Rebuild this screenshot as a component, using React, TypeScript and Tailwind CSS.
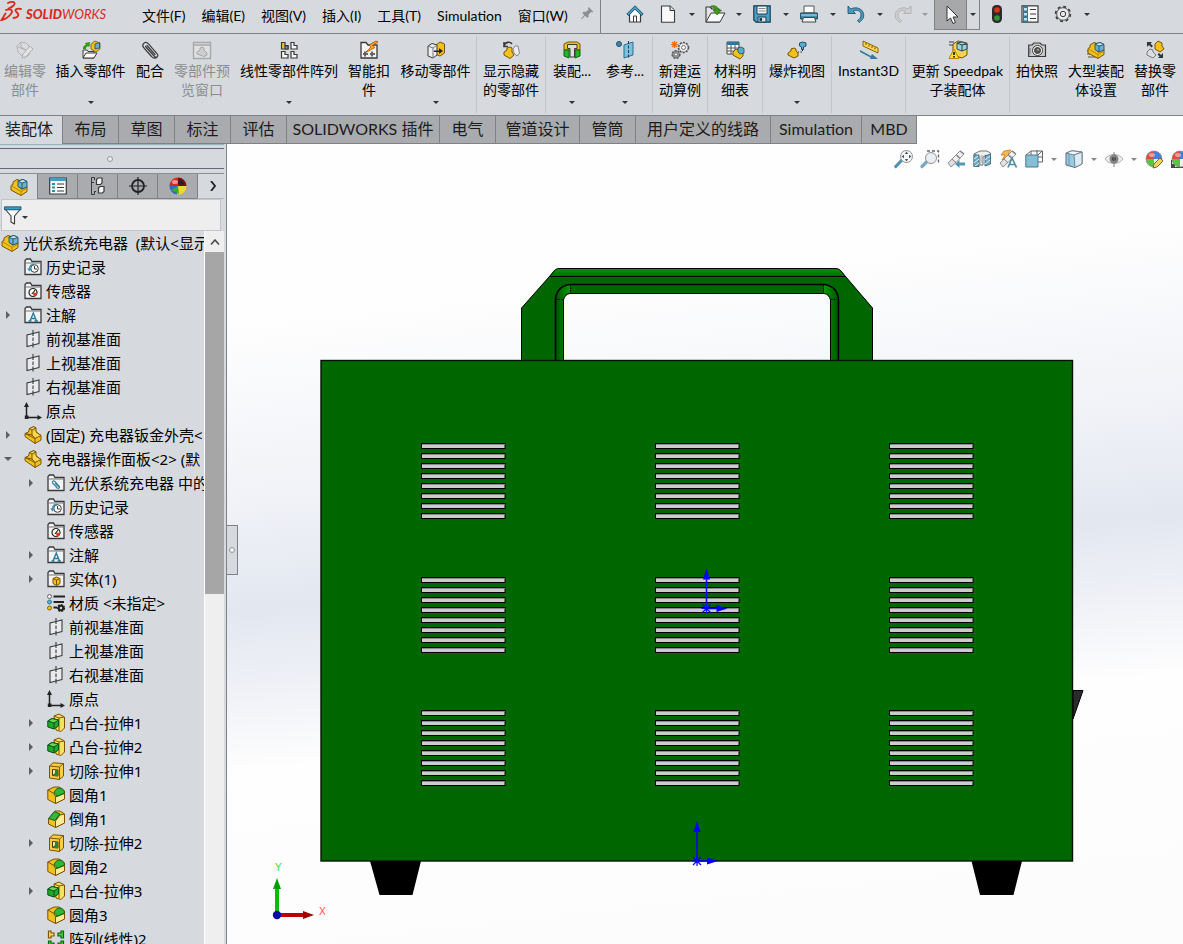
import type { ReactNode } from "react";

const Y = "#f2c21c";
const K = "#3a3a3a";
const B = "#3f8fb5";

const Part = () => (
  <g strokeLinejoin="round" stroke="#7a5200" strokeWidth="1">
    <path d="M5.500 2.500 9.500 .8 12 1.800V6L17 9.500V14L11 17.500 1 10.500V7.500L4.500 6Z" fill={Y} />
    <path d="M5.500 2.500 8 4 12 1.800 9.500 .8Z" fill="#ffe98a" />
    <path d="M8 4V9L11 12.500 17 9.500 12 6" fill="#ffd94a" />
    <path d="M1 7.500 8 9M11 12.500V17.500M1 7.500 11 12.500" fill="none" />
  </g>
);

const Cube = () => (
  <g stroke="#1d4f68" strokeWidth=".9" strokeLinejoin="round">
    <path d="M8 3 13 1.500 17 3.500V9L12 11 8 8.500Z" fill="#69b2d4" />
    <path d="M8 3 12 5 17 3.500 13 1.500Z" fill="#cdeaf5" />
    <path d="M12 5V11" fill="none" />
  </g>
);

const Assembly = () => (
  <g>
    <path d="M1 7.500 3 6.500V4L7 1.500 10 2.500V8L11 11 17 8.500V13.500L11 17.500 1 12Z" fill={Y} stroke="#7a5200" strokeLinejoin="round" />
    <path d="M1 7.500 11 13.500 17 10M11 13.500V17" fill="none" stroke="#a87400" strokeWidth=".8" />
    <Cube />
  </g>
);

const Folder = ({ children }: { children?: ReactNode }) => (
  <g>
    <path d="M1 16.500V2.500L2.500 1H6.500L8 3.500H17V16.500Z" fill="#f4f4f4" stroke={K} strokeWidth="1.300" />
    <path d="M1.500 5H16.500" stroke="#777" />
    {children}
  </g>
);

const Gear = ({ cx, cy, r, fill = "#eee" }: { cx: number; cy: number; r: number; fill?: string }) => (
  <g>
    <circle cx={cx} cy={cy} r={r} fill={fill} stroke="#555" strokeWidth="1.600" strokeDasharray="2 1.200" />
    <circle cx={cx} cy={cy} r={r - 0.6} fill={fill} stroke="#555" strokeWidth=".6" />
    <circle cx={cx} cy={cy} r={r / 2.5} fill="#fff" stroke="#555" strokeWidth=".8" />
  </g>
);

const Ball = () => (
  <g>
    <path d="M9 9V1A8 8 0 0 0 1 9Z" fill="#e2372f" />
    <path d="M9 9V1A8 8 0 0 1 17 9Z" fill="#3a6fd0" />
    <path d="M9 9H1A8 8 0 0 0 9 17Z" fill="#45c12e" />
    <path d="M9 9H17A8 8 0 0 1 9 17Z" fill="#f0f0e6" />
    <circle cx="9" cy="9" r="8" fill="none" stroke="#777" strokeWidth=".7" />
    <ellipse cx="7" cy="5" rx="3" ry="2" fill="#fff" opacity=".45" />
  </g>
);

const Telescope = () => (
  <g stroke="#777" strokeWidth=".9" strokeLinejoin="round">
    <path d="M1 13 5 9 9 12.500 4 17Z" fill="#ddd" />
    <path d="M5 9 13 1 17 4 9 12.500Z" fill="#f0f0f0" />
    <path d="M9.500 5 13 8.500M13 1 17 4" fill="none" strokeWidth="1.500" />
  </g>
);

const ICONS: Record<string, ReactNode> = {
  part: <Part />,
  assembly: <Assembly />,
  editPart: (
    <g fill="#dcdcdc" stroke="#a8a8a8" strokeLinejoin="round">
      <path d="M1 5 5 1 10 2 13 5V14L8 17 2 11Z" />
      <path d="M5 1V6L10 9V14M2 6 10 9" fill="none" />
      <path d="M6 17 7 13 14 5 17 8 10 15.500Z" fill="#e6e6e6" />
    </g>
  ),
  insertPart: (
    <g>
      <path d="M1 17V9H5L6 10.500H12V17Z" fill="#f4f4f4" stroke={K} />
      <path d="M1 17 4 12H15L12 17Z" fill="#fff" stroke={K} />
      <path d="M1 8C1 5 2 4 4 4L3 2 8 1 7.500 6 6 5.300C4 6 4 7 4 8Z" fill="#2e9b12" />
      <path d="M9 3 13 0 18 2V8L14 11 9 8Z" fill={Y} stroke="#7a5200" strokeWidth=".8" />
      <path d="M13 3 17.500 1.500V7L13 8Z" fill="#64aece" stroke="#1d4f68" strokeWidth=".8" />
    </g>
  ),
  clip: (
    <path d="M4.500 5.500 13.500 15.500C15.500 17.500 18 15 16.200 12.800L7.500 2.800C4.500 -.5 .2 3 2.500 6.500L10.500 15.500C12.500 18 15.500 17.500 16.500 15.500M6 4.500 14 13.500" fill="none" stroke={K} strokeWidth="1.200" strokeLinecap="round" />
  ),
  preview: (
    <g fill="none" stroke="#9c9c9c">
      <path d="M.5 1.500H17.500V17.500H.5ZM.5 4H17.500" fill="#e2e2e2" strokeWidth="1.400" />
      <path d="M4 11 7 9V7L9 6 11 7V9L14 12V14L11 15.500 4 13Z" fill="#ccc" />
    </g>
  ),
  linear: (
    <g strokeWidth="1.200" fill="#f7f7f7" stroke={K}>
      <path d="M1.500 1.500H5V4.500H8V8H1.500Z" fill={Y} />
      <path d="M5 5H8V8H5Z" fill="#58abd0" />
      <path d="M11 1.500H14V4.500H17V8H11ZM1.500 10.500H5V13.500H8V17H1.500ZM11 10.500H14V13.500H17V17H11Z" />
    </g>
  ),
  smart: (
    <g>
      <path d="M1 17V1.500H6L8 4H17V17Z" fill="#f4f4f4" stroke={K} strokeWidth="1.300" />
      <path d="M3 13H8M10 13H15M5 10.500V15.500M12 10.500V15.500" stroke="#666" strokeWidth="2" />
      <path d="M16 0 9 4 11 6 5 12 15 6.500 12.500 4.500 18 1Z" fill="#ffa726" stroke="#a63a00" strokeWidth=".7" />
    </g>
  ),
  move: (
    <g strokeLinejoin="round">
      <path d="M9 4 13 1 17.500 3V12L13 15 8 13Z" fill={Y} stroke="#7a5200" />
      <path d="M1 5 5 2.500 10 4V14L6 17 1 15Z" fill="#eee" stroke={K} />
      <path d="M1 5 6 7 10 4M6 7V17" fill="none" stroke="#777" />
      <path d="M7 9.500H12V7L16 10 12 13V11H7Z" fill="#222" />
    </g>
  ),
  showHide: (
    <g>
      <path d="M2 5C3 1 8 0 10 3M2 1V5.500H6" fill="none" stroke={K} strokeWidth="1.600" />
      <path d="M2 11 5 9V7L8 6 10 7V11L12 14 8 17.500 2 14Z" fill={Y} stroke="#7a5200" />
      <path d="M11 8 13 5H16L17.500 12 15 15 12 12Z" fill="#eee" stroke="#888" />
    </g>
  ),
  asmFeature: (
    <g strokeLinejoin="round">
      <path d="M1 3 5 1H14L17 3V9H1Z" fill={Y} stroke="#7a5200" />
      <path d="M1 9H6V17L1 15ZM12 9H17V15L12 17Z" fill="#22b527" stroke="#0b6410" />
      <path d="M4.500 3.500H14V7.500H11.500V16H7V7.500H4.500Z" fill="#dedede" stroke={K} />
    </g>
  ),
  reference: (
    <g>
      <circle cx="3" cy="3" r="2.500" fill="#3f86ac" stroke="#1d4f68" />
      <path d="M8 4 17 1V14L8 17Z" fill="#7cc0de" stroke="#2b6f90" />
      <path d="M12.500 0V18" stroke="#173f54" strokeDasharray="3 1.500" />
    </g>
  ),
  motion: (
    <g>
      <Gear cx={12.500} cy={6.500} r={5} />
      <Gear cx={5} cy={13.500} r={3.800} fill="#aaa" />
      <path d="M3.500 0V7M0 3.500H7M1 1 6 6M6 1 1 6" stroke="#e66b12" strokeWidth="1.200" />
    </g>
  ),
  bom: (
    <g>
      <path d="M1 1H13V13H1Z" fill="#fff" stroke="#444" />
      <path d="M1 1H13V4H1Z" fill="#2f7699" />
      <path d="M1 7H13M1 10H13M5 4V13M9 4V13" stroke="#555" />
      <path d="M7 11 10 8 17 10V15L14 18 7 14Z" fill={Y} stroke="#7a5200" />
      <path d="M12 7 15 6 18 7.500V12L14 13 12 11Z" fill="#58abd0" stroke="#1d4f68" strokeWidth=".8" />
    </g>
  ),
  explode: (
    <g>
      <path d="M0 12 3 10V8L6 7 8 8V10L10 12V15L6 17 0 14Z" fill={Y} stroke="#7a5200" />
      <path d="M11.500 2 14.500 1 18 2V5L15.500 6V8.500H13.500V6L11.500 5Z" fill="#58abd0" stroke="#1d4f68" />
      <path d="M14.500 8.500V11H10" fill="none" stroke="#222" strokeDasharray="1.500 1.500" />
    </g>
  ),
  instant: (
    <g>
      <path d="M3 0 18 7V12L3 5Z" fill="#ffd84f" stroke="#8a6200" />
      <path d="M6 2V4M9 3.500V5.500M12 5V7M15 6.500V8.500" stroke="#6b4a00" />
      <path d="M0 9 11 15 12 13 18 18H10L10.500 16.500 0 11Z" fill="#2f7da1" />
    </g>
  ),
  speedpak: (
    <g strokeLinejoin="round">
      <path d="M4 3 9 0 18 2V14L13 17 4 14Z" fill="#f7d34f" stroke="#7a5200" />
      <path d="M8 2 13 1 18 3V8L13 10 8 8Z" fill="#9fd2e6" stroke="#1d4f68" />
      <path d="M13 4V10M8 2 13 4 18 3M0 1H5M0 4H4" stroke={K} fill="none" />
      <path d="M5 8 10 17.500H0Z" fill="#ffe02a" stroke="#b48700" />
      <path d="M5 11V14M5 15V16.500" stroke="#000" strokeWidth="1.500" />
    </g>
  ),
  camera: (
    <g stroke={K} fill="#c9c9c9">
      <path d="M.7 4H4L6 2H12L14 4H17.500V15.500H.7Z" strokeWidth="1.200" />
      <circle cx="9.500" cy="9.500" r="5" fill="#f7f7f7" />
      <circle cx="9.500" cy="9.500" r="3" fill="#555" />
      <circle cx="10" cy="8.800" r="1" fill="#aaa" stroke="none" />
      <path d="M2 7V13" stroke="#777" />
    </g>
  ),
  largeAsm: (
    <g>
      <path d="M0 10H5M0 13H7M1 16H10" stroke="#555" />
      <Assembly />
    </g>
  ),
  replace: (
    <g>
      <path d="M9 3 12 0 16 2V5L18 8 14 11 9 8Z" fill={Y} stroke="#7a5200" />
      <path d="M1 11 4 8 7 9V11L10 14 7 17 1 14Z" fill="#ddd" stroke="#777" />
      <path d="M1 1H6L4.500 2.500 7 5 5.500 6.500 3 4 1 6ZM17 17H12L13.500 15.500 11.500 13.500 13 12 15 14 17 12Z" fill="#333" />
    </g>
  ),
  home: (
    <g strokeLinejoin="round">
      <path d="M3.500 8V17H14.500V8L9 3Z" fill="#fff" stroke={K} strokeWidth="1.200" />
      <path d="M7.500 17V11H10.500V17" fill="none" stroke={K} />
      <path d="M.8 9 9 .8 17.200 9 15.500 10.500 9 4.200 2.500 10.500Z" fill="#4c9fc4" stroke="#164a62" strokeWidth=".9" />
    </g>
  ),
  file: (
    <g>
      <path d="M2.500 1H11L15.500 5.500V17.200H2.500Z" fill="#f8f8f8" stroke={K} strokeWidth="1.100" strokeLinejoin="round" />
      <path d="M11 1V5.500H15.500" fill="#ddd" stroke={K} />
    </g>
  ),
  open: (
    <g strokeLinejoin="round">
      <path d="M0 17V2H4L6 4H13V17Z" fill="#e4e4e4" stroke={K} strokeWidth="1.100" />
      <path d="M0 17 5 8H19L14 17Z" fill="#fafafa" stroke={K} />
      <path d="M5 1C10 0 12 2 12.500 5H15.500L11 10 7 5H9.500C9 3 8 2 5 2Z" fill="#3da016" stroke="#1e6405" strokeWidth=".6" />
    </g>
  ),
  save: (
    <g>
      <path d="M.8 .8H17.200V17.200H3L.8 15Z" fill="#4a9fc8" stroke="#173e52" strokeWidth="1.200" />
      <path d="M4 1H14V9H4Z" fill="#f6f6f6" stroke="#173e52" />
      <path d="M5.500 3.500H12.500M5.500 6H12.500" stroke="#888" />
      <path d="M5 12H13V17H5Z" fill="#ddd" stroke="#173e52" />
      <path d="M6.500 13H9V16H6.500Z" fill="#173e52" />
    </g>
  ),
  print: (
    <g>
      <path d="M4 1H14V8H4Z" fill="#fff" stroke="#555" />
      <path d="M.7 8H17.300V14H.7Z" fill="#438fb1" stroke="#173e52" />
      <path d="M1 10H17" stroke="#b7def0" />
      <path d="M3.500 12.500H14.500L16 17H2Z" fill="#f4f4f4" stroke="#444" />
    </g>
  ),
  undo: <path d="M1 1V8.500H8.500L6 6.300C10 4 14 6 14 10 14 13 12 14.500 10.500 15.500L12 17.500C16 15 17.300 12 16.500 8.500 15 3 8.500 1.500 3.800 4Z" fill="#4b9bc0" stroke="#174a62" strokeWidth=".8" />,
  redo: <path d="M17 1V8.500H9.500L12 6.300C8 4 4 6 4 10 4 13 6 14.500 7.500 15.500L6 17.500C2 15 .7 12 1.500 8.500 3 3 9.500 1.500 14.200 4Z" fill="#cfcfcf" stroke="#aaa" strokeWidth=".8" />,
  cursor: <path d="M5 0V15L8.500 12 11 17.500 13.500 16.500 11 11H16Z" fill="#fff" stroke="#333" />,
  light: (
    <g>
      <rect x="4" y="0" width="10" height="18" rx="4.500" fill="#2b2b2b" />
      <circle cx="9" cy="5" r="2.800" fill="#e0301c" />
      <circle cx="9" cy="13" r="2.800" fill="#2f9a2c" />
    </g>
  ),
  options: (
    <g>
      <path d="M1 .8H17V17.200H1Z" fill="#fafafa" stroke={K} strokeWidth="1.200" />
      <path d="M2 1H7V17H2Z" fill="#3b7893" />
      <path d="M3 3H6V5.500H3ZM3 8H6V10.500H3ZM3 13H6V15.500H3Z" fill="#bfe2f0" />
      <path d="M9 4.500H15M9 9H15M9 13.500H15" stroke={K} />
    </g>
  ),
  gear: (
    <g>
      <circle cx="9" cy="9" r="7.400" fill="none" stroke={K} strokeWidth="1.600" strokeDasharray="3 2.810" />
      <circle cx="9" cy="9" r="6.300" fill="#e8eaec" stroke={K} strokeWidth=".9" />
      <circle cx="9" cy="9" r="2.700" fill="none" stroke={K} />
    </g>
  ),
  pin: <path d="M10.500 0 17 6.500 15.500 7.500 14 7 10.500 10.500V14L8.500 15 5.500 12 1 17 0 16 4.500 11 2 8.500 3.500 6.500H7L10.500 3.500 9.500 1.500Z" fill="#8d8f92" />,
  props: (
    <g>
      <path d="M.7 1H17.300V17H.7Z" fill="#fafafa" stroke={K} strokeWidth="1.200" />
      <path d="M1 1H17V4H1Z" fill="#4a9cbd" />
      <path d="M3 6H6V8H3ZM3 9.500H6V11.500H3ZM3 13H6V15H3Z" fill="#3a87a9" />
      <path d="M8 7H15M8 10.500H15M8 14H15" stroke={K} />
    </g>
  ),
  config: (
    <g fill="#f4f4f4" stroke={K}>
      <path d="M2.500 .5H5.500V3M2.500 .5V17.500H5.500V14.500M5 5.500H2.500M7 14.500H5" fill="none" />
      <path d="M7.500 2.500 9 1H13V6L11.500 7.500H7.500ZM9.500 11 11 9.500H15V14.500L13.500 16H9.500Z" strokeWidth="1.200" />
    </g>
  ),
  target: (
    <g fill="none" stroke="#222">
      <circle cx="9" cy="9" r="6" strokeWidth="1.800" />
      <path d="M9 0V18M0 9H18" strokeWidth="1.200" />
    </g>
  ),
  appearance: (
    <g>
      <path d="M9 9V.5A8.500 8.500 0 0 0 .5 9Z" fill="#e0261c" />
      <path d="M9 9 9 .5A8.500 8.500 0 0 1 17.500 9Z" fill="#7b1010" />
      <path d="M9 9H.5A8.500 8.500 0 0 0 8 17.500Z" fill="#2e68cf" />
      <path d="M9 9H17.500A8.500 8.500 0 0 1 8 17.500Z" fill="#f5d532" />
      <path d="M2 13 9 9 10 17Z" fill="#33ad30" />
      <path d="M11 2 15 6 13 9 9 6Z" fill="#222" />
      <ellipse cx="6" cy="5" rx="3" ry="2" fill="#fff" opacity=".5" />
    </g>
  ),
  filter: (
    <g strokeLinejoin="round">
      <path d="M1 3 7 10V16L10.500 18V10L16.500 3Z" fill="#fafafa" stroke={K} strokeWidth="1.100" />
      <path d="M.5 .8H17V3.800H.5Z" fill="#3a9cc4" stroke="#164a62" strokeWidth=".8" />
    </g>
  ),
  history: (
    <Folder>
      <circle cx="10.500" cy="10.500" r="3.800" fill="#fff" stroke={K} />
      <path d="M10.500 8V11H13" fill="none" stroke={K} />
      <path d="M3 10.500H8L5.500 13.500Z" fill={B} />
      <path d="M5.500 11C5.500 8 7.500 6.500 10 6.500" fill="none" stroke={B} strokeWidth="1.300" />
    </Folder>
  ),
  sensor: (
    <Folder>
      <circle cx="9" cy="10.500" r="4" fill="#fff" stroke="#222" strokeWidth="1.200" />
      <path d="M9 10.500 13 11A4 4 0 0 1 9.500 14.500Z" fill="#e0401c" />
      <path d="M8 12 11.500 7.500" stroke="#222" strokeWidth="1.200" />
    </Folder>
  ),
  note: (
    <Folder>
      <path d="M4.500 15H7.500M10.500 15H14M6 15 9.300 7 12.500 15M7 12.500H11.500" fill="none" stroke="#2a7ba0" strokeWidth="1.400" />
    </Folder>
  ),
  mates: (
    <Folder>
      <path d="M5 8 10 14C12 15 13.500 13.500 12 12L8 7.500C6 6 4.500 8 6 9.500L10 13.500M8 9 12 13" fill="none" stroke="#3b7f9e" strokeWidth="1.100" />
    </Folder>
  ),
  solid: (
    <Folder>
      <path d="M6 8.500 9.500 7 13 8.500V13.500L9.500 15.500 6 13.500Z" fill={Y} stroke="#7a5200" />
      <path d="M6 8.500 9.500 10 13 8.500M9.500 10V15" fill="none" stroke="#7a5200" />
    </Folder>
  ),
  plane: (
    <g fill="none" stroke={K} strokeWidth="1.100">
      <path d="M3 5 15 2V13.500L3 16.500Z" fill="#e9ebee" stroke="none" />
      <path d="M7 4 3 5V16.500L7 15.500M11 3 15 2V13.500L11 14.500" />
      <path d="M7 4 11 3M7 15.500 11 14.500" />
      <path d="M9 0V6M9 7.500V11M9 12.500V17.500" />
    </g>
  ),
  origin: (
    <g fill="none" stroke="#222" strokeWidth="1.500">
      <path d="M2.500 3V15.500H15" />
      <path d="M2.500 0 5 5H0ZM18 15.500 13.500 13V18ZM.8 13.500H4.500V17H.8Z" fill="#222" stroke="none" />
    </g>
  ),
  material: (
    <g>
      <path d="M6.500 2.500H18M6.500 8H17M6.500 13.500H10" stroke="#222" strokeWidth="1.800" />
      <circle cx="2.500" cy="2.500" r="2" fill="#fff" stroke="#666" />
      <circle cx="2.500" cy="8" r="2" fill="#5ab5dc" stroke="#28789b" />
      <circle cx="2.500" cy="14" r="2" fill={Y} stroke="#8a6200" />
      <circle cx="14" cy="14" r="3.300" fill="#222" stroke="#222" strokeWidth="1.600" strokeDasharray="1.800 1.200" />
      <circle cx="14" cy="14" r="1.200" fill="#ddd" />
    </g>
  ),
  boss: (
    <g strokeLinejoin="round">
      <path d="M7 2 12 0 17.500 3V14L14 17.500 9 16Z" fill="#ffdf63" stroke="#7a5200" />
      <path d="M12 4V16M12 4 17 3M7 2 12 4" fill="none" stroke="#7a5200" />
      <path d="M.8 7 5 4.500 11.500 6V12L7 15 .8 13Z" fill="#25a52b" stroke="#0a5210" />
      <path d="M.8 7 7 9 11.500 6 5 4.500Z" fill="#63dc58" stroke="#0a5210" />
      <path d="M7 9V15" stroke="#0a5210" />
    </g>
  ),
  cut: (
    <g strokeLinejoin="round">
      <path d="M2.500 4 6 .8 16.500 1.500V14L12.500 17.500 2.500 16Z" fill="#f6cf3c" stroke="#7a5200" />
      <path d="M2.500 4 12.500 5 16.500 1.500M12.500 5V17.500" fill="none" stroke="#7a5200" />
      <path d="M5.500 7.500 11 8V14L5.500 13.500Z" fill="#fff3b0" stroke="#4f3900" />
      <path d="M8 8V11L5.500 13 11 14V8Z" fill="#1e8c28" />
    </g>
  ),
  fillet: (
    <g strokeLinejoin="round">
      <path d="M.8 4 7 1H12L17.500 5V13L8.500 17.500 .8 13.500Z" fill={Y} stroke="#7a5200" />
      <path d="M8.500 11 17.500 7.500V13L8.500 17.500Z" fill="#ffec9a" stroke="#7a5200" />
      <path d="M.8 4 7 7.500 8.500 11V17" fill="none" stroke="#7a5200" />
      <path d="M7 6.500C8 3.500 11 2 13 2 16 2.500 17.500 4.500 17.500 7L9.500 10.500C9.500 9 8.500 7.500 7 6.500Z" fill="#30b53a" stroke="#0b6410" />
    </g>
  ),
  chamfer: (
    <g strokeLinejoin="round">
      <path d="M1.500 9 8 1H13L17.500 4V13L8.500 17.500 1.500 14Z" fill={Y} stroke="#7a5200" />
      <path d="M8.500 11 13 5 17.500 4V13L8.500 17.500Z" fill="#ffec9a" stroke="#7a5200" />
      <path d="M1.500 8.500 7.500 1.500 13 4 8 10.500Z" fill="#35b541" stroke="#0b6410" />
    </g>
  ),
  pattern: (
    <g strokeWidth="1.200" stroke="#0b6410" fill="#42cf3d">
      <path d="M1.500 1H4V3H7V6H4V8H1.500Z" fill="#ffdf63" stroke="#7a5200" />
      <path d="M11 3H14V1H16.500V8H14V6H11ZM1.500 11H4V13H7V16H1.500ZM11 13H14V11H16.500V17H11Z" />
    </g>
  ),
  zoomFit: (
    <g>
      <path d="M.8 16.500 6.500 10.500" stroke="#3f87a8" strokeWidth="3.200" strokeLinecap="round" />
      <circle cx="11.500" cy="6.500" r="6" fill="#f4f7f9" stroke="#888" />
      <path d="M11.500 1.500 9.800 4H13.200ZM11.500 11.500 9.800 9H13.200ZM6.500 6.500 9 4.800V8.200ZM16.500 6.500 14 4.800V8.200Z" fill="#444" />
    </g>
  ),
  zoomArea: (
    <g>
      <path d="M6 1H17.500V13" fill="none" stroke="#555" strokeDasharray="3 2" strokeWidth="1.300" />
      <path d="M1 16.500 6 11.500" stroke="#6a9fbc" strokeWidth="3.200" strokeLinecap="round" />
      <circle cx="10" cy="8" r="5.500" fill="#e6edf2" stroke="#888" />
    </g>
  ),
  previous: (
    <g>
      <Telescope />
      <path d="M8 14 12.500 10V12.500H18V15.500H12.500V18Z" fill="#3f8cb0" />
    </g>
  ),
  section: (
    <g strokeLinejoin="round">
      <path d="M.8 4 7 1H14L17.500 3V12L13 14V5L10 7V15H6V7Z" fill="#eee" stroke="#666" />
      <path d="M.8 5H6V16.500H.8ZM12 6 17.500 4V14L12 16Z" fill="#5b9fbd" stroke="#38647a" />
      <path d="M1 9 5 6M1 13 6 9M2 16 6 13M12 10 17 6M12 14 17 10" stroke="#e7f4fa" />
      <path d="M7 6V15M9 5V13" stroke="#999" />
    </g>
  ),
  dynamic: (
    <g>
      <path d="M5 1 12 0 9 4H12L3 10 6 5H2Z" fill="#ffb13b" stroke="#ba5a00" strokeWidth=".7" />
      <Telescope />
      <path d="M9 17.500 13 8 17.500 17.500M10.500 14.500H16" fill="none" stroke="#3f7f9e" strokeWidth="1.700" />
    </g>
  ),
  orient: (
    <g>
      <path d="M6 5V1H17.500V12H13M12 0V5M13 7H18M17 1 13 5M1 5 6 1" fill="none" stroke="#555" />
      <path d="M.8 5H13V17H.8Z" fill="#7bb8cf" stroke="#356c84" />
    </g>
  ),
  display: (
    <g strokeLinejoin="round">
      <path d="M1 3 7 .8 17 2V14L10 17.500 1 15Z" fill="#8fc5da" stroke="#557" />
      <path d="M1 3 9 5 17 2 7 .8Z" fill="#eef7fb" stroke="#678" />
      <path d="M9 5 17 2V14L10 17.500Z" fill="#d8e9f0" stroke="#678" />
      <path d="M4 4V15" stroke="#538ca5" />
    </g>
  ),
  eye: (
    <g>
      <path d="M0 9C4 3 14 3 18 9 14 15 4 15 0 9Z" fill="#ececec" stroke="#aaa" />
      <circle cx="9" cy="9" r="4.500" fill="#777" />
      <circle cx="9" cy="9" r="2" fill="#222" />
      <path d="M9 2V17" stroke="#777" />
    </g>
  ),
  ball: (
    <g>
      <Ball />
      <path d="M8 18 9 14 15 8 18 11 12 17Z" fill="#f5cf4c" stroke="#5e4a10" strokeWidth=".9" />
    </g>
  ),
  scene: (
    <g>
      <path d="M0 10H18V18H0Z" fill="#333" />
      <path d="M1 11H4V14H1ZM4 14H7V17H4ZM12 14H15V17H12ZM15 11H18V14H15Z" fill="#eee" />
      <Ball />
    </g>
  ),
};

function Icon({ name, className = "size-[18px]" }: { name: string; className?: string }) {
  return (
    <svg viewBox="0 0 18 18" className={`${className} shrink-0 overflow-visible`} aria-hidden="true">
      {ICONS[name]}
    </svg>
  );
}

function Caret({ className = "text-[#333]" }: { className?: string }) {
  return (
    <svg viewBox="0 0 6 3" className={`h-[3px] w-[6px] shrink-0 ${className}`} aria-hidden="true">
      <path d="M0 0H6L3 3Z" fill="currentColor" />
    </svg>
  );
}

const MENUS = ["文件(F)", "编辑(E)", "视图(V)", "插入(I)", "工具(T)", "Simulation", "窗口(W)"];

const QUICK = [
  { icon: "file", label: "新建" },
  { icon: "open", label: "打开" },
  { icon: "save", label: "保存" },
  { icon: "print", label: "打印" },
  { icon: "undo", label: "撤消" },
];

function MenuBar() {
  return (
    <header className="flex h-[34px] shrink-0 items-stretch border-b border-[#7f8184]">
      <div className="flex w-[601px] shrink-0 border-r border-[#7f8184]">
        <div className="flex w-[142px] shrink-0 items-start text-[#da291c]">
          <svg viewBox="0 0 24 24" className="size-6 shrink-0" aria-hidden="true">
            <g fill="none" stroke="currentColor" strokeWidth="1.800" strokeLinecap="round">
              <path d="M8 3C12 1 17 2 13.500 5.500 12 7 10 8 8.500 8.500" />
              <path d="M6 10C11 8.500 14 10.500 10.500 14.500 8 17.500 5 19.500 1.500 20L5.500 13.500" />
              <path d="M21 9C16.500 8 14 9.500 16.500 12 19.500 14.500 19 17.500 13.500 18" />
            </g>
          </svg>
          <span className="ml-[2px] pt-1 font-['Lato'] text-[13px] leading-5 italic">
            <span className="font-black">SOLID</span>
            <span>WORKS</span>
          </span>
        </div>
        <nav className="flex min-w-0 flex-1 items-center gap-4 pb-[2px] text-sm leading-5">
          {MENUS.map((m) => (
            <button key={m} type="button" className="whitespace-nowrap">
              {m}
            </button>
          ))}
        </nav>
        <button type="button" aria-label="固定菜单" className="flex w-[26px] shrink-0 items-center justify-center pb-[6px]">
          <Icon name="pin" className="size-[13px]" />
        </button>
      </div>
      <div className="ml-[22px] flex min-w-0 items-stretch pb-[5px]">
        <button type="button" aria-label="主页" className="mr-[9px] flex w-6 items-center justify-center">
          <Icon name="home" />
        </button>
        {QUICK.map((q) => (
          <div key={q.icon} className="flex">
            <button type="button" aria-label={q.label} className="flex w-6 items-center justify-center">
              <Icon name={q.icon} />
            </button>
            <button type="button" aria-label={`${q.label}选项`} className="flex w-[23px] items-center justify-center">
              <Caret />
            </button>
          </div>
        ))}
        <button type="button" aria-label="重做" disabled className="flex w-6 items-center justify-center">
          <Icon name="redo" />
        </button>
        <button type="button" aria-label="重做选项" disabled className="flex w-[19px] items-center justify-center">
          <Caret className="text-[#999]" />
        </button>
        <div className="-mb-[2px] flex border border-t-0 border-[#7f8184]">
          <button type="button" aria-label="选择" className="flex w-8 items-center justify-center border-r border-[#7f8184] bg-[#a7a8aa]">
            <Icon name="cursor" />
          </button>
          <button type="button" aria-label="选择选项" className="flex w-3 items-center justify-center">
            <Caret />
          </button>
        </div>
        <button type="button" aria-label="重建模型" className="flex w-[33px] items-center justify-center">
          <Icon name="light" />
        </button>
        <button type="button" aria-label="文件属性" className="flex w-[33px] items-center justify-center">
          <Icon name="options" />
        </button>
        <button type="button" aria-label="选项" className="flex w-[33px] items-center justify-center">
          <Icon name="gear" />
        </button>
        <button type="button" aria-label="更多选项" className="flex w-4 items-center justify-center">
          <Caret />
        </button>
      </div>
    </header>
  );
}

type Tool = { icon: string; lines: string[]; width: string; menu?: boolean; off?: boolean };

const RIBBON: Tool[][] = [
  [
    { icon: "editPart", lines: ["编辑零", "部件"], width: "w-[50px]", off: true },
    { icon: "insertPart", lines: ["插入零部件"], width: "w-[81px]", menu: true },
    { icon: "clip", lines: ["配合"], width: "w-[38px]" },
    { icon: "preview", lines: ["零部件预", "览窗口"], width: "w-[66px]", off: true },
    { icon: "linear", lines: ["线性零部件阵列"], width: "w-[108px]", menu: true },
    { icon: "smart", lines: ["智能扣", "件"], width: "w-[52px]" },
    { icon: "move", lines: ["移动零部件"], width: "w-[81px]", menu: true },
  ],
  [{ icon: "showHide", lines: ["显示隐藏", "的零部件"], width: "w-[68px]" }],
  [
    { icon: "asmFeature", lines: ["装配..."], width: "w-[52px]", menu: true },
    { icon: "reference", lines: ["参考..."], width: "w-[54px]", menu: true },
  ],
  [{ icon: "motion", lines: ["新建运", "动算例"], width: "w-[54px]" }],
  [{ icon: "bom", lines: ["材料明", "细表"], width: "w-[54px]" }],
  [{ icon: "explode", lines: ["爆炸视图"], width: "w-[68px]", menu: true }],
  [{ icon: "instant", lines: ["Instant3D"], width: "w-[73px]" }],
  [{ icon: "speedpak", lines: ["更新 Speedpak", "子装配体"], width: "w-[103px]" }],
  [
    { icon: "camera", lines: ["拍快照"], width: "w-[54px]" },
    { icon: "largeAsm", lines: ["大型装配", "体设置"], width: "w-[64px]" },
    { icon: "replace", lines: ["替换零", "部件"], width: "w-[54px]" },
  ],
];

function Ribbon() {
  return (
    <div className="flex h-[81px] shrink-0 items-stretch overflow-hidden py-[2px]">
      {RIBBON.map((group, gi) => (
        <div key={gi} className={gi === 0 ? "flex shrink-0" : "flex shrink-0 border-l border-[#c2c5c9]"}>
          {group.map((t) => (
            <button
              key={t.icon}
              type="button"
              disabled={t.off}
              className={`${t.width} ${t.off ? "text-[#8b8d90]" : "text-black"} flex flex-col items-center pt-[5px] text-sm leading-[19px]`}
            >
              <Icon name={t.icon} className={t.off ? "mb-[2px] size-[18px] opacity-80" : "mb-[2px] size-[18px]"} />
              {t.lines.map((l) => (
                <span key={l} className="whitespace-nowrap">
                  {l}
                </span>
              ))}
              {t.menu && (
                <span className="mt-auto pb-[9px]">
                  <Caret />
                </span>
              )}
            </button>
          ))}
        </div>
      ))}
    </div>
  );
}

const TABS = [
  { label: "布局", width: "w-14" },
  { label: "草图", width: "w-14" },
  { label: "标注", width: "w-14" },
  { label: "评估", width: "w-14" },
  { label: "SOLIDWORKS 插件", width: "w-[153px]" },
  { label: "电气", width: "w-14" },
  { label: "管道设计", width: "w-[84px]" },
  { label: "管筒", width: "w-14" },
  { label: "用户定义的线路", width: "w-[135px]" },
  { label: "Simulation", width: "w-[91px]" },
  { label: "MBD", width: "w-14" },
];

function CommandTabs() {
  return (
    <div role="tablist" className="flex h-[29px] shrink-0 border-t border-[#7f8184] bg-[#fefefe] text-base leading-6 text-[#1c1c1c]">
      <button type="button" role="tab" aria-selected="true" className="w-[62px] shrink-0 bg-[#d6dade] pr-1 pb-[2px] whitespace-nowrap">
        装配体
      </button>
      {TABS.map((t) => (
        <button
          key={t.label}
          type="button"
          role="tab"
          aria-selected="false"
          className={`${t.width} shrink-0 border-b border-l border-[#7f8184] bg-[#a9abae] pb-px whitespace-nowrap last:border-r`}
        >
          {t.label}
        </button>
      ))}
    </div>
  );
}

type Node = { icon: string; label: string; level: number; arrow?: "closed" | "open" };

const TREE: Node[] = [
  { icon: "assembly", label: "光伏系统充电器\u00a0 (默认<显示", level: 0 },
  { icon: "history", label: "历史记录", level: 1 },
  { icon: "sensor", label: "传感器", level: 1 },
  { icon: "note", label: "注解", level: 1, arrow: "closed" },
  { icon: "plane", label: "前视基准面", level: 1 },
  { icon: "plane", label: "上视基准面", level: 1 },
  { icon: "plane", label: "右视基准面", level: 1 },
  { icon: "origin", label: "原点", level: 1 },
  { icon: "part", label: "(固定) 充电器钣金外壳<", level: 1, arrow: "closed" },
  { icon: "part", label: "充电器操作面板<2> (默", level: 1, arrow: "open" },
  { icon: "mates", label: "光伏系统充电器 中的", level: 2, arrow: "closed" },
  { icon: "history", label: "历史记录", level: 2 },
  { icon: "sensor", label: "传感器", level: 2 },
  { icon: "note", label: "注解", level: 2, arrow: "closed" },
  { icon: "solid", label: "实体(1)", level: 2, arrow: "closed" },
  { icon: "material", label: "材质 <未指定>", level: 2 },
  { icon: "plane", label: "前视基准面", level: 2 },
  { icon: "plane", label: "上视基准面", level: 2 },
  { icon: "plane", label: "右视基准面", level: 2 },
  { icon: "origin", label: "原点", level: 2 },
  { icon: "boss", label: "凸台-拉伸1", level: 2, arrow: "closed" },
  { icon: "boss", label: "凸台-拉伸2", level: 2, arrow: "closed" },
  { icon: "cut", label: "切除-拉伸1", level: 2, arrow: "closed" },
  { icon: "fillet", label: "圆角1", level: 2 },
  { icon: "chamfer", label: "倒角1", level: 2 },
  { icon: "cut", label: "切除-拉伸2", level: 2, arrow: "closed" },
  { icon: "fillet", label: "圆角2", level: 2 },
  { icon: "boss", label: "凸台-拉伸3", level: 2, arrow: "closed" },
  { icon: "fillet", label: "圆角3", level: 2 },
  { icon: "pattern", label: "阵列(线性)2", level: 2 },
];

const INDENT = ["pl-px", "pl-1", "pl-[27px]"];

function TreeRow({ node }: { node: Node }) {
  return (
    <li role="treeitem" aria-level={node.level + 1} className={`${INDENT[node.level]} flex h-6 items-center`}>
      {node.level > 0 && (
        <span className="mr-3 flex w-2 shrink-0 items-center justify-center text-[#5e6063]">
          {node.arrow && (
            <svg viewBox="0 0 8 8" className="size-2" aria-hidden="true">
              <path d={node.arrow === "open" ? "M0 2H8L4 6Z" : "M2 0 6 4 2 8Z"} fill="currentColor" />
            </svg>
          )}
        </span>
      )}
      <Icon name={node.icon} />
      <span className="ml-1 text-[15px] leading-6 whitespace-nowrap">{node.label}</span>
    </li>
  );
}

const PANEL_TABS = [
  { icon: "props", label: "属性" },
  { icon: "config", label: "配置" },
  { icon: "target", label: "尺寸专家" },
  { icon: "appearance", label: "外观" },
];

function SidePanel() {
  return (
    <aside className="flex w-[227px] shrink-0 flex-col border-r border-[#7f8184] pr-[2px] font-['Noto_Sans','Noto_Sans_CJK_SC',sans-serif]">
      <div className="h-1 shrink-0 border-t border-[#8fb4bd]" />
      <div className="flex h-[21px] shrink-0 items-center justify-center border-y border-[#66667f] pr-1">
        <span className="size-[6px] rounded-full border border-[#999] bg-[#eee]" />
      </div>
      <div role="tablist" className="mt-1 flex h-[26px] shrink-0 border-t border-[#8b8d90]">
        <button type="button" role="tab" aria-selected="true" aria-label="特征树" className="flex w-[37px] items-center justify-center">
          <Icon name="assembly" />
        </button>
        {PANEL_TABS.map((t) => (
          <button
            key={t.icon}
            type="button"
            role="tab"
            aria-selected="false"
            aria-label={t.label}
            className="flex w-10 items-center justify-center border-b border-l border-[#7f8184] bg-[#a9abae]"
          >
            <Icon name={t.icon} />
          </button>
        ))}
        <button type="button" aria-label="更多" className="flex flex-1 items-center justify-center border-b border-l border-b-[#b5b7ba] border-l-[#7f8184] pl-1">
          <svg viewBox="0 0 6 10" className="h-[10px] w-[6px]" aria-hidden="true">
            <path d="M1 0 5 5 1 10" fill="none" stroke="#222" strokeWidth="1.800" />
          </svg>
        </button>
      </div>
      <div className="mr-[3px] ml-px flex h-8 shrink-0 items-center border border-[#c3c5c8] bg-[#eeeeee] pl-[2px]">
        <Icon name="filter" />
        <span className="pt-1">
          <Caret />
        </span>
        <input aria-label="筛选特征树" className="min-w-0 flex-1 bg-transparent px-1 text-sm outline-none" />
      </div>
      <div className="flex min-h-0 flex-1">
        <ul role="tree" className="min-w-0 flex-1 overflow-hidden">
          {TREE.map((n, i) => (
            <TreeRow key={i} node={n} />
          ))}
        </ul>
        <div className="flex w-5 shrink-0 flex-col border-l border-white bg-[#efefef]">
          <button type="button" aria-label="向上滚动" className="flex h-[21px] shrink-0 items-center justify-center">
            <svg viewBox="0 0 10 6" className="h-[6px] w-[10px]" aria-hidden="true">
              <path d="M1 5.500 5 1 9 5.500" fill="none" stroke="#444" strokeWidth="1.500" />
            </svg>
          </button>
          <div className="h-[48%] bg-[#a6a6a6]" />
        </div>
      </div>
    </aside>
  );
}

const VIEW_TOOLS = [
  { icon: "zoomFit", label: "整屏显示全图" },
  { icon: "zoomArea", label: "局部放大" },
  { icon: "previous", label: "上一视图" },
  { icon: "section", label: "剖面视图" },
  { icon: "dynamic", label: "动态注解视图" },
  { icon: "orient", label: "视图定向", menu: true },
  { icon: "display", label: "显示样式", menu: true },
  { icon: "eye", label: "隐藏项目", menu: true },
  { icon: "ball", label: "编辑外观" },
  { icon: "scene", label: "应用布景" },
];

function Slots({ x, y }: { x: number; y: number }) {
  return (
    <g>
      {[0, 1, 2, 3, 4, 5, 6, 7].map((i) => (
        <g key={i}>
          <rect x={x} y={y + i * 10} width="84.500" height="6" fill="#000" />
          <rect x={x + 1} y={y + 1 + i * 10} width="82.500" height="4" fill="#cccccc" />
          <rect x={x + 1} y={y + 1 + i * 10} width="82.500" height="1" fill="#8c898c" />
        </g>
      ))}
    </g>
  );
}

function OriginMark({ x, y }: { x: number; y: number }) {
  return (
    <g transform={`translate(${x} ${y})`} stroke="#0000ff" fill="#0000ff">
      <path d="M0 0V-32M0 0H12" strokeWidth="1.500" />
      <path d="M0 -40 3.500 -29H-3.500ZM21 0 10 -3.500V3.500Z" stroke="none" />
      <path d="M-4 -4 4 4M4 -4-4 4M-5 0H5M0 5V-5" strokeWidth="1.200" />
    </g>
  );
}

function Model() {
  return (
    <svg viewBox="227 144 956 800" className="size-full" role="img" aria-label="光伏系统充电器 模型">
      <defs>
        <linearGradient id="top" x1="0" y1="0" x2="0" y2="1">
          <stop offset="0" stopColor="#009a00" />
          <stop offset="1" stopColor="#006600" />
        </linearGradient>
        <linearGradient id="legL">
          <stop offset="0" stopColor="#005000" />
          <stop offset="1" stopColor="#009a00" />
        </linearGradient>
        <linearGradient id="legR">
          <stop offset="0" stopColor="#009a00" />
          <stop offset="1" stopColor="#005000" />
        </linearGradient>
      </defs>
      <path d="M1073 690.500H1083L1073 719Z" fill="#2b2b2b" stroke="#000" />
      <path
        d="M521.500 360V308L549 277 554 271Q556 268.500 559 268.500H836Q839 268.500 841 271L846 277 872.500 308V360H830.500V300Q829 294 824 293.500H570Q565 294 563.500 300V360Z"
        fill="#006600"
      />
      <path d="M549 277 554 271Q556 268.500 559 268.500H836Q839 268.500 841 271L846 277Z" fill="url(#top)" />
      <path d="M555.500 360V299Q557 286 570 284.500V293.500Q565 294 563.500 300V360Z" fill="url(#legL)" />
      <path d="M838.500 360V299Q837 286 824 284.500V293.500Q829 294 830.500 300V360Z" fill="url(#legR)" />
      <g fill="none" stroke="#000">
        <path d="M521.500 360V308L549 277 554 271Q556 268.500 559 268.500H836Q839 268.500 841 271L846 277 872.500 308V360" />
        <path d="M549 276.500H846" />
        <path d="M555.500 360V299Q557 286 570 284.500H824Q837 286 838.500 299V360" strokeWidth="1.600" />
        <path d="M563.500 360V300Q565 294 570 293.500H824Q829 294 830.500 300V360" />
        <path d="M570.500 285V293M823.500 285V293M556 299.500H563M831 299.500H838" strokeDasharray="1.500 1" />
      </g>
      <rect x="321" y="360.500" width="751.500" height="500.500" fill="#006600" stroke="#001400" strokeWidth="1.400" />
      {[443, 577, 710].map((y) => [421, 655, 889].map((x) => <Slots key={`${x}-${y}`} x={x} y={y} />))}
      <path d="M370 861H421L412.500 895H379.500ZM971.500 861H1022L1013.500 895H980Z" fill="#000" />
      <OriginMark x={706.5} y={608.5} />
      <OriginMark x={697} y={861} />
      <path d="M277 915V886" stroke="#00c000" strokeWidth="4" />
      <path d="M277 878 281 889H273Z" fill="#00a000" />
      <path d="M277 915H305" stroke="#bb0000" strokeWidth="4" />
      <path d="M314 915 303 911V919Z" fill="#a00000" />
      <circle cx="277" cy="915" r="4.200" fill="#0a0aa8" />
      <g fontFamily="Liberation Sans, sans-serif" fontSize="10">
        <text x="275" y="871" fill="#2fe02f">Y</text>
        <text x="319" y="915" fill="#ff4a4a">X</text>
      </g>
    </svg>
  );
}

function Viewport() {
  return (
    <main className="relative min-w-0 flex-1 overflow-hidden bg-[linear-gradient(174deg,#fefefe_0%,#fefefe_20%,#f0f2f7_40%,#e3e7f0_52%,#eef0f6_60%,#fefefe_70%,#fcfcfd_100%)]">
      <Model />
      <div className="absolute top-[5px] -right-[10px] flex items-center opacity-90">
        {VIEW_TOOLS.map((t) => (
          <div key={t.icon} className="flex items-center">
            <button type="button" aria-label={t.label} className="flex h-5 w-[26px] items-center justify-center">
              <Icon name={t.icon} />
            </button>
            {t.menu && (
              <button type="button" aria-label={`${t.label}选项`} className="flex h-5 w-[14px] items-center justify-center">
                <Caret className="text-[#777]" />
              </button>
            )}
          </div>
        ))}
      </div>
      <button
        type="button"
        aria-label="折叠面板"
        className="absolute top-[381px] -left-px flex h-[50px] w-3 items-center justify-center border border-l-0 border-[#7f8184] bg-[#d6dade]"
      >
        <span className="size-[6px] rounded-full border border-[#999] bg-[#eee]" />
      </button>
    </main>
  );
}

export default function App() {
  return (
    <div className="flex h-screen flex-col overflow-hidden bg-[#d6dade] font-['Lato','Noto_Sans_CJK_SC',sans-serif] text-black">
      <MenuBar />
      <Ribbon />
      <CommandTabs />
      <div className="flex min-h-0 flex-1">
        <SidePanel />
        <Viewport />
      </div>
    </div>
  );
}
